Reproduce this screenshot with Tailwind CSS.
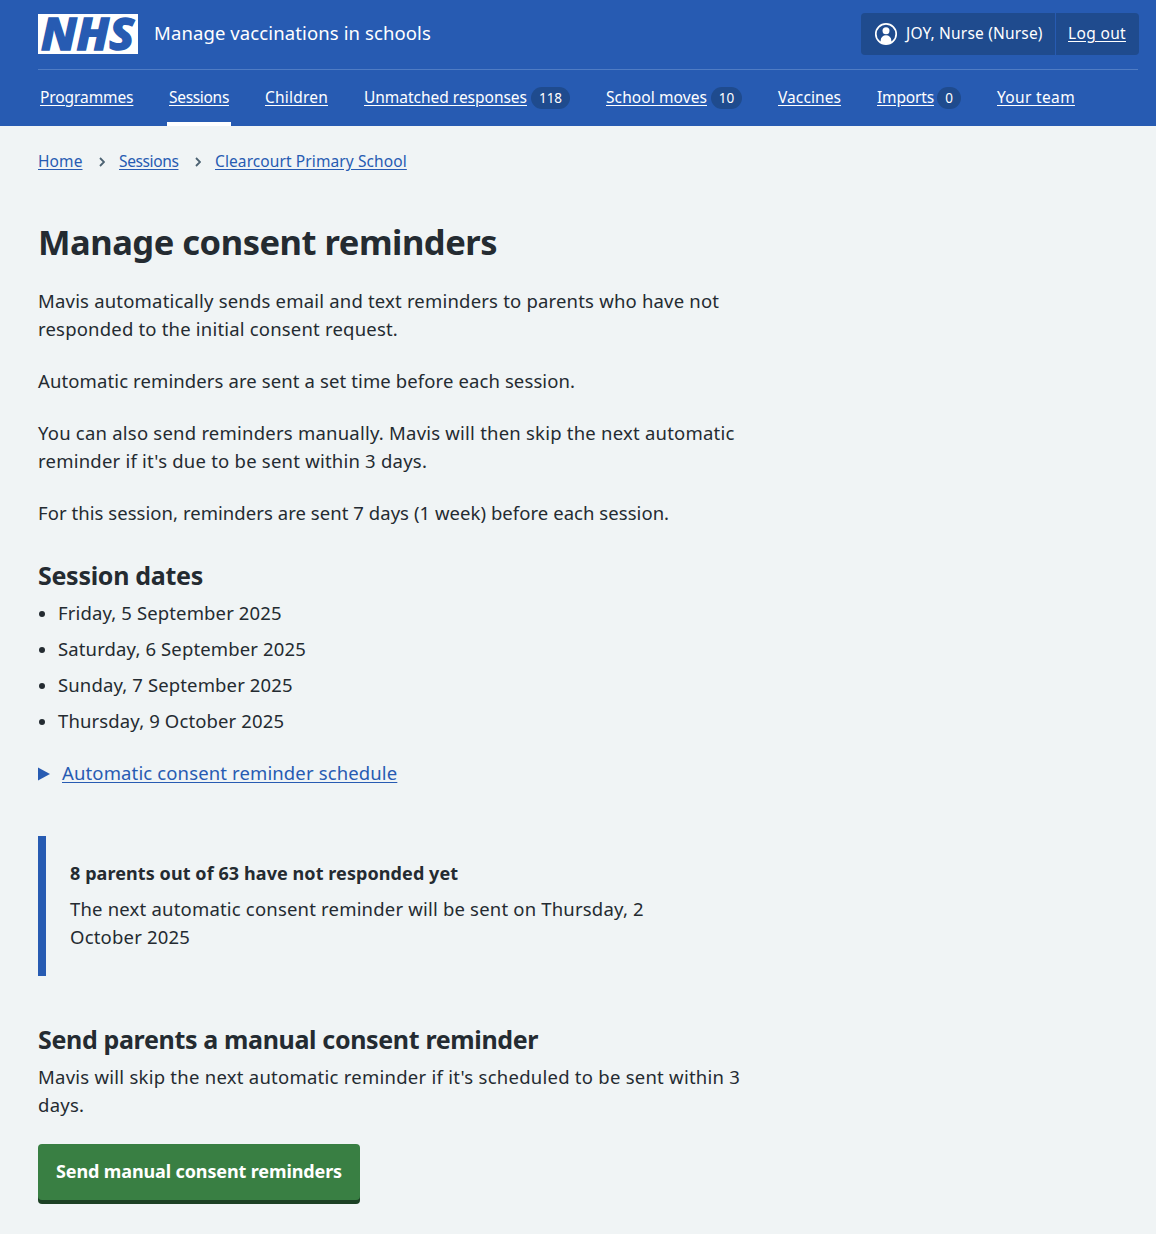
<!DOCTYPE html>
<html lang="en">
<head>
<meta charset="utf-8">
<title>Manage consent reminders</title>
<script src="https://cdn.jsdelivr.net/npm/@tailwindcss/browser@4"></script>
</head>
<body class="min-h-[1234px] bg-[#f0f4f5] font-['Noto_Sans',sans-serif] text-[18.5px] leading-7 text-[#242b31]">
<header class="h-[126px] bg-[#275bb2] pl-[38px] pr-[17px] text-[15.5px] text-white">
  <div class="flex h-[69px] items-start justify-between pt-[13px]">
    <a class="flex items-center gap-4">
      <svg class="mt-px h-10 w-[100px] overflow-visible" viewBox="0 0 100 40" role="img" aria-label="NHS">
        <rect width="100" height="40" fill="#fff"/>
        <text x="3" y="35.7" font-family="Noto Sans, sans-serif" font-weight="800" font-style="italic" font-size="44" textLength="93" lengthAdjust="spacingAndGlyphs" fill="#275bb2" stroke="#275bb2" stroke-width="1.4">NHS</text>
      </svg>
      <span class="pb-0.5 text-[18.5px] leading-7 tracking-[0.11px]">Manage vaccinations in schools</span>
    </a>
    <div class="flex h-[42px] items-stretch rounded bg-[#1f4b8e]">
      <div class="flex w-[195px] items-center gap-2 border-r border-[#275bb2] pl-[13px]">
        <svg class="size-6" viewBox="0 0 24 24" fill="none">
          <circle cx="12" cy="12" r="10.2" stroke="#fff" stroke-width="1.7"/>
          <circle cx="12" cy="8.7" r="3.5" fill="#fff"/>
          <path d="M6.7 20.4v-2.2a5.3 5 0 0 1 10.6 0v2.2a10 10 0 0 1-10.6 0z" fill="#fff"/>
        </svg>
        <span class="whitespace-nowrap pb-0.5 leading-6 tracking-[0.18px]">JOY, Nurse (Nurse)</span>
      </div>
      <a class="flex w-[83px] items-center pb-0.5 pl-3 leading-6 tracking-[0.34px] underline underline-offset-2">Log out</a>
    </div>
  </div>
  <nav class="mr-px flex h-[57px] items-stretch gap-8 whitespace-nowrap border-t border-[#4f7cc4] leading-6 underline-offset-2">
    <a class="w-[97px] px-0.5 pt-[15px] tracking-[-0.09px] underline">Programmes</a>
    <a class="w-16 border-b-4 border-white px-0.5 pt-[15px] tracking-[-0.31px] underline">Sessions</a>
    <a class="w-[67px] px-0.5 pt-[15px] tracking-[0.21px] underline">Children</a>
    <a class="flex w-[210px] items-start px-0.5 pt-[15px]"><span class="w-[167px] tracking-[-0.02px] underline">Unmatched responses</span><span class="mt-0.5 flex h-[22px] w-[39px] items-center justify-center rounded-full bg-[#1f4b8e] text-[13.5px]">118</span></a>
    <a class="flex w-[140px] items-start px-0.5 pt-[15px]"><span class="w-[105px] tracking-[0.09px] underline">School moves</span><span class="mt-0.5 flex h-[22px] w-[31px] items-center justify-center rounded-full bg-[#1f4b8e] text-[13.5px]">10</span></a>
    <a class="w-[67px] px-0.5 pt-[15px] tracking-[0.09px] underline">Vaccines</a>
    <a class="flex w-[88px] items-start px-0.5 pt-[15px]"><span class="w-[60px] tracking-[-0.16px] underline">Imports</span><span class="mt-0.5 flex h-[22px] w-6 items-center justify-center rounded-full bg-[#1f4b8e] text-[13.5px]">0</span></a>
    <a class="px-0.5 pt-[15px] tracking-[0.34px] underline">Your team</a>
  </nav>
</header>

<div class="px-[38px]">
  <nav class="flex items-center pt-[23px] text-[15.5px] leading-6 text-[#275bb2] underline-offset-2">
    <a class="w-[44px] tracking-[0.1px] underline">Home</a>
    <svg class="ml-[17px] mr-3.5 mt-0.5 h-2.5 w-1.5" viewBox="0 0 6 10" fill="none" stroke="#4c6272" stroke-width="1.8"><path d="M1 1l4 4-4 4"/></svg>
    <a class="w-[59px] tracking-[-0.38px] underline">Sessions</a>
    <svg class="ml-[17px] mr-3.5 mt-0.5 h-2.5 w-1.5" viewBox="0 0 6 10" fill="none" stroke="#4c6272" stroke-width="1.8"><path d="M1 1l4 4-4 4"/></svg>
    <a class="tracking-[0.1px] underline">Clearcourt Primary School</a>
  </nav>

  <main class="w-[720px] pt-[47px]">
    <h1 class="text-[34.5px] font-bold leading-[44px] tracking-[-0.48px]">Manage consent reminders</h1>
    <p class="mt-[23px] tracking-[0.19px]">Mavis automatically sends email and text reminders to parents who have not<br>responded to the initial consent request.</p>
    <p class="mt-6 tracking-[0.11px]">Automatic reminders are sent a set time before each session.</p>
    <p class="mt-6 tracking-[0.22px]">You can also send reminders manually. Mavis will then skip the next automatic<br>reminder if it's due to be sent within 3 days.</p>
    <p class="mt-6 tracking-[0.05px]">For this session, reminders are sent 7 days (1 week) before each session.</p>

    <h2 class="mt-8 text-[25px] font-bold leading-8 tracking-[-0.29px]">Session dates</h2>
    <ul class="mt-2 flex flex-col gap-2 tracking-[0.13px]">
      <li class="flex items-center gap-[13px]"><i class="ml-px mt-0.5 size-1.5 rounded-full bg-[#242b31]"></i>Friday, 5 September 2025</li>
      <li class="flex items-center gap-[13px]"><i class="ml-px mt-0.5 size-1.5 rounded-full bg-[#242b31]"></i>Saturday, 6 September 2025</li>
      <li class="flex items-center gap-[13px]"><i class="ml-px mt-0.5 size-1.5 rounded-full bg-[#242b31]"></i>Sunday, 7 September 2025</li>
      <li class="flex items-center gap-[13px]"><i class="ml-px mt-0.5 size-1.5 rounded-full bg-[#242b31]"></i>Thursday, 9 October 2025</li>
    </ul>

    <div class="mt-6 flex items-center gap-3 text-[#275bb2]">
      <svg class="mt-0.5 h-3.5 w-3" viewBox="0 0 12 14" fill="currentColor"><path d="M0 .5l12 6.5-12 6.5z"/></svg>
      <span class="tracking-[0.13px] underline underline-offset-2">Automatic consent reminder schedule</span>
    </div>

    <section class="mt-[49px] border-l-8 border-[#275bb2] px-6 pb-[25px] pt-[23px]">
      <h3 class="text-[18px] font-bold leading-7 tracking-[0.08px]">8 parents out of 63 have not responded yet</h3>
      <p class="mt-2 tracking-[0.19px]">The next automatic consent reminder will be sent on Thursday, 2<br>October 2025</p>
    </section>

    <h2 class="mt-[47px] text-[25px] font-bold leading-8 tracking-[-0.35px]">Send parents a manual consent reminder</h2>
    <p class="mt-2 tracking-[0.25px]">Mavis will skip the next automatic reminder if it's scheduled to be sent within 3<br>days.</p>
    <button class="mt-[25px] block h-14 w-[322px] rounded bg-[#397f43] pb-0.5 text-[18px] font-bold tracking-[-0.12px] text-white shadow-[0_4px_0_#1c4024]">Send manual consent reminders</button>
  </main>
</div>
</body>
</html>
